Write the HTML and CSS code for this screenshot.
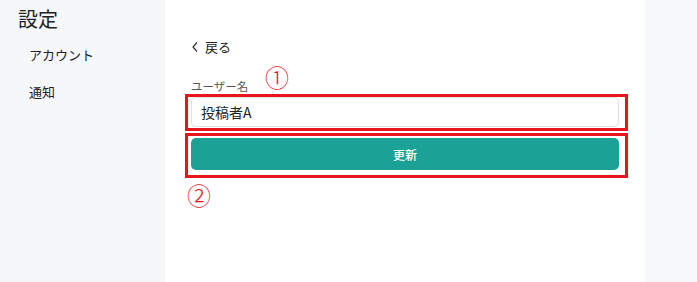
FILE: index.html
```html
<!DOCTYPE html>
<html lang="ja">
<head>
<meta charset="utf-8">
<link rel="stylesheet" href="styles.css">
</head>
<body>
<div class="page">
  <aside class="sidebar">
    <h1 class="title">設定</h1>
    <nav class="nav">
      <a class="nav-item">アカウント</a>
      <a class="nav-item">通知</a>
    </nav>
  </aside>
  <main class="main">
    <a class="back">
      <svg class="back-icon" width="8" height="12" viewBox="0 0 8 12"><path d="M6 1.5 L2 6 L6 10.5" fill="none" stroke="#333" stroke-width="1.2"/></svg>
      <span>戻る</span>
    </a>
    <form class="form">
      <label class="label">ユーザー名</label>
      <div class="input">投稿者A</div>
      <button class="button" type="button">更新</button>
    </form>
    <div class="mark mark-box mark-box1"></div>
    <div class="mark mark-box mark-box2"></div>
    <div class="mark mark-num mark-num1">①</div>
    <div class="mark mark-num mark-num2">②</div>
  </main>
  <div class="rest"></div>
</div>
</body>
</html>
```
FILE: styles.css
```css
* { box-sizing: border-box; }
html, body { margin: 0; padding: 0; }
body {
  font-family: "Noto Sans CJK JP", "Noto Sans", sans-serif;
  color: #222;
  background: #f7f8fa;
}
.page {
  display: flex;
  height: 282px;
  overflow: hidden;
}
.sidebar {
  width: 165px;
  flex: none;
  background: #f6f7f9;
  padding: 4px 0 0 18px;
}
.title {
  margin: 0;
  font-size: 20px;
  font-weight: 400;
  line-height: 30px;
  color: #222;
}
.nav {
  display: flex;
  flex-direction: column;
  gap: 17px;
  padding: 11px 0 0 11px;
}
.nav-item {
  font-size: 13px;
  line-height: 20px;
  color: #222;
}
.main {
  position: relative;
  width: 480px;
  flex: none;
  background: #fff;
  padding: 37px 26px 0 26px;
}
.back {
  display: flex;
  align-items: center;
  gap: 6px;
  font-size: 13px;
  line-height: 20px;
  color: #222;
}
.back-icon { flex: none; }
.form {
  display: flex;
  flex-direction: column;
  padding-top: 19px;
}
.label {
  font-size: 11.5px;
  line-height: 20px;
  color: #555;
}
.input {
  margin-top: 1px;
  height: 30px;
  border: 1px solid #e0e0e3;
  border-radius: 4px;
  padding: 0 9px;
  font-size: 14px;
  line-height: 28px;
  color: #222;
}
.button {
  margin-top: 11px;
  height: 32px;
  border: none;
  border-radius: 5px;
  background: #1ba195;
  color: #fff;
  font-family: inherit;
  font-size: 12px;
  font-weight: 500;
}
.rest {
  flex: 1;
  background: #f7f8fa;
}
.mark { position: absolute; }
.mark-box {
  left: 20px;
  width: 443px;
  border: 3px solid #e8141e;
}
.mark-box1 { top: 94px; height: 37px; }
.mark-box2 { top: 133px; height: 45px; }
.mark-num {
  color: #e8141e;
  font-size: 24px;
  font-weight: 300;
  line-height: 24px;
}
.mark-num1 { left: 100px; top: 65px; }
.mark-num2 { left: 22px; top: 183px; }
```
